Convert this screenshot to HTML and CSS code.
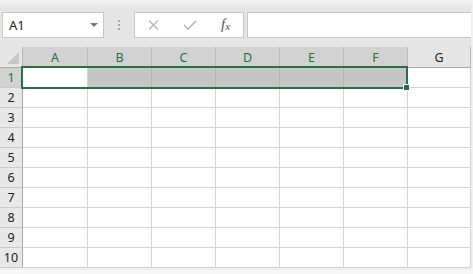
FILE: index.html
```html
<!DOCTYPE html>
<html>
<head>
<meta charset="utf-8">
<link rel="stylesheet" href="styles.css">
</head>
<body>
<div class="window">
  <div class="toolbar">
    <div class="namebox"><span class="ref">A1</span><span class="arrow"></span></div>
    <div class="sep"><i></i><i></i><i></i></div>
    <div class="btns">
      <span class="slot s1"><svg width="11" height="10" viewBox="0 0 11 10"><path d="M1 0.5 L10 9.5 M10 0.5 L1 9.5" stroke="#b4b4b4" stroke-width="1.3" fill="none"/></svg></span>
      <span class="slot s2"><svg width="14" height="10" viewBox="0 0 14 10"><path d="M1 5 L5 9 L13 1" stroke="#b4b4b4" stroke-width="1.6" fill="none"/></svg></span>
      <span class="slot s3"><span class="fx">f<sub>x</sub></span></span>
    </div>
    <div class="formula"></div>
  </div>
  <div class="sheet">
    <div class="grid">
      <div class="c hd corner"><svg width="13" height="13" viewBox="0 0 13 13"><path d="M12 0 L12 12 L0 12 Z" fill="#c6c6c6"/></svg></div>
      <div class="c hd sel">A</div><div class="c hd sel">B</div><div class="c hd sel">C</div><div class="c hd sel">D</div><div class="c hd sel">E</div><div class="c hd sel">F</div><div class="c hd">G</div>

      <div class="c rh sel">1</div><div class="c"></div><div class="c fill"></div><div class="c fill"></div><div class="c fill"></div><div class="c fill"></div><div class="c fill"></div><div class="c"></div>
      <div class="c rh">2</div><div class="c"></div><div class="c"></div><div class="c"></div><div class="c"></div><div class="c"></div><div class="c"></div><div class="c"></div>
      <div class="c rh">3</div><div class="c"></div><div class="c"></div><div class="c"></div><div class="c"></div><div class="c"></div><div class="c"></div><div class="c"></div>
      <div class="c rh">4</div><div class="c"></div><div class="c"></div><div class="c"></div><div class="c"></div><div class="c"></div><div class="c"></div><div class="c"></div>
      <div class="c rh">5</div><div class="c"></div><div class="c"></div><div class="c"></div><div class="c"></div><div class="c"></div><div class="c"></div><div class="c"></div>
      <div class="c rh">6</div><div class="c"></div><div class="c"></div><div class="c"></div><div class="c"></div><div class="c"></div><div class="c"></div><div class="c"></div>
      <div class="c rh">7</div><div class="c"></div><div class="c"></div><div class="c"></div><div class="c"></div><div class="c"></div><div class="c"></div><div class="c"></div>
      <div class="c rh">8</div><div class="c"></div><div class="c"></div><div class="c"></div><div class="c"></div><div class="c"></div><div class="c"></div><div class="c"></div>
      <div class="c rh">9</div><div class="c"></div><div class="c"></div><div class="c"></div><div class="c"></div><div class="c"></div><div class="c"></div><div class="c"></div>
      <div class="c rh">10</div><div class="c"></div><div class="c"></div><div class="c"></div><div class="c"></div><div class="c"></div><div class="c"></div><div class="c"></div>
    </div>
    <div class="selection"></div>
    <div class="handle"></div>
  </div>
</div>
</body>
</html>
```
FILE: styles.css
```css
html, body {
  margin: 0;
  padding: 0;
}
body {
  background: #f7f7f7;
  font-family: "Noto Sans", "Open Sans", "Liberation Sans", sans-serif;
  width: 473px;
  height: 274px;
  overflow: hidden;
}
.window {
  width: 471px;
  height: 268px;
  background: #e6e6e6;
  display: flex;
  flex-direction: column;
  box-shadow: 1px 1px 3px rgba(0,0,0,0.06);
}
.toolbar {
  height: 47px;
  box-sizing: border-box;
  padding: 12px 0 0 2px;
  display: flex;
  align-items: flex-start;
  background: linear-gradient(#f4f4f4, #e6e6e6 7px);
}
.namebox {
  width: 102px;
  height: 26px;
  box-sizing: border-box;
  border: 1px solid #c6c6c6;
  background: #fff;
  display: flex;
  align-items: center;
  justify-content: space-between;
}
.ref {
  padding-left: 6px;
  font-size: 13px;
  color: #222;
  line-height: 1;
}
.arrow {
  width: 0;
  height: 0;
  border-left: 4px solid transparent;
  border-right: 4px solid transparent;
  border-top: 4px solid #777;
  margin-right: 5px;
}
.sep {
  width: 30px;
  height: 26px;
  display: flex;
  flex-direction: column;
  align-items: center;
  justify-content: center;
  gap: 2px;
}
.sep i {
  display: block;
  width: 2px;
  height: 2px;
  background: #a8a8a8;
}
.btns {
  width: 110px;
  height: 26px;
  box-sizing: border-box;
  border: 1px solid #c6c6c6;
  background: #fff;
  display: flex;
}
.slot {
  display: flex;
  align-items: center;
  justify-content: center;
  height: 24px;
}
.s1 { width: 36px; }
.s2 { width: 38px; }
.s3 { width: 33px; }
.fx {
  font-family: "Liberation Serif", "DejaVu Serif", serif;
  font-style: italic;
  font-size: 15px;
  color: #555;
  line-height: 1;
  margin-top: -2px;
}
.fx sub {
  font-size: 11px;
  vertical-align: -1px;
}
.formula {
  margin-left: 3px;
  width: 224px;
  height: 26px;
  box-sizing: border-box;
  border: 1px solid #c6c6c6;
  border-right: none;
  background: #fff;
}
.sheet {
  position: relative;
}
.grid {
  display: grid;
  grid-template-columns: 23px 65px 64px 64px 64px 64px 64px 63px;
  grid-template-rows: 21px repeat(10, 20px);
  background: #fff;
}
.c {
  box-sizing: border-box;
  border-right: 1px solid #d4d4d4;
  border-bottom: 1px solid #d4d4d4;
}
.hd {
  background: #e6e6e6;
  border-right-color: #b8b8b8;
  border-bottom-color: #ababab;
  font-size: 12.5px;
  color: #222;
  display: flex;
  align-items: center;
  justify-content: center;
}
.corner {
  align-items: flex-end;
  justify-content: flex-end;
  padding: 0 2px 2px 0;
}
.corner svg { display: block; }
.hd.sel {
  background: #d2d2d2;
  color: #217346;
}
.rh {
  background: #e8e8e8;
  border-right-color: #a9a9a9;
  border-bottom-color: #cbcbcb;
  font-size: 12.5px;
  color: #222;
  display: flex;
  align-items: center;
  justify-content: center;
}
.rh.sel {
  background: #d2d2d2;
  color: #217346;
}
.fill {
  background: #c6c6c6;
  border-right-color: #b4b4b4;
}
.selection {
  position: absolute;
  left: 21px;
  top: 19px;
  width: 387px;
  height: 23px;
  box-sizing: border-box;
  border: 2px solid #217346;
}
.handle {
  position: absolute;
  left: 404px;
  top: 38px;
  width: 5px;
  height: 5px;
  background: #217346;
  box-shadow: 0 0 0 1px #fff;
}
```
